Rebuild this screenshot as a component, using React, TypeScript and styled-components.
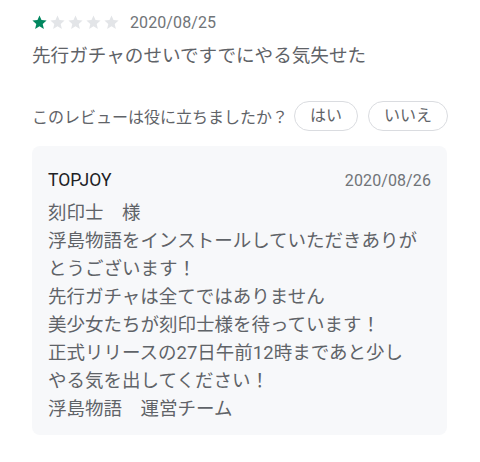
import React from 'react'
import styled, { createGlobalStyle } from 'styled-components'

const GlobalStyle = createGlobalStyle`
  html, body {
    margin: 0;
    padding: 0;
    background: #ffffff;
  }
  body {
    font-family: Roboto, 'Noto Sans CJK JP', sans-serif;
  }
`

const Page = styled.div`
  width: 480px;
  height: 462px;
  box-sizing: border-box;
  padding: 10px 33px 0 32px;
  display: flex;
  flex-direction: column;
`

const MetaRow = styled.div`
  display: flex;
  align-items: center;
  height: 24px;
  gap: 10px;
`

const Stars = styled.div`
  display: flex;
  gap: 1px;
  margin-left: -1px;
`

const DateText = styled.span`
  font-size: 16px;
  color: #707478;
  letter-spacing: 0.1px;
`

const ReviewText = styled.p`
  margin: 8px 0 0;
  font-size: 18.6px;
  line-height: 28px;
  color: #5f6368;
`

const HelpfulRow = styled.div`
  display: flex;
  align-items: center;
  margin-top: 31px;
  white-space: nowrap;
`

const HelpfulLabel = styled.span`
  font-size: 16px;
  color: #5f6368;
  margin-right: 6px;
  flex-shrink: 0;
`

const Chip = styled.button`
  flex-shrink: 0;
  height: 30px;
  padding: 0 15px;
  margin-right: 10px;
  border: 1px solid #dadce0;
  border-radius: 15px;
  background: #ffffff;
  font-family: Roboto, 'Noto Sans CJK JP', sans-serif;
  font-size: 16px;
  color: #5f6368;
  line-height: 28px;
  white-space: nowrap;
`

const ReplyCard = styled.div`
  margin-top: 15px;
  background: #f7f8fa;
  border-radius: 8px;
  padding: 15px 16px 12px 16px;
  height: 289px;
  box-sizing: border-box;
`

const ReplyHeader = styled.div`
  display: flex;
  justify-content: space-between;
  align-items: center;
  height: 38px;
`

const Developer = styled.span`
  font-size: 17.5px;
  color: #202124;
`

const ReplyBody = styled.p`
  margin: 0;
  font-size: 18.5px;
  line-height: 28px;
  color: #5f6368;
  white-space: pre-line;
`

const Star = ({ filled }: { filled: boolean }) => (
  <svg width="17" height="17" viewBox="0 0 24 24">
    <path
      d="M12 17.27L18.18 21l-1.64-7.03L22 9.24l-7.19-.61L12 2 9.19 8.63 2 9.24l5.46 4.73L5.82 21z"
      fill={filled ? '#01875f' : '#e3e5e8'}
    />
  </svg>
)

const reply = `刻印士　様
浮島物語をインストールしていただきありが
とうございます！
先行ガチャは全てではありません
美少女たちが刻印士様を待っています！
正式リリースの27日午前12時まであと少し
やる気を出してください！
浮島物語　運営チーム`

export default function App() {
  return (
    <>
      <GlobalStyle />
      <Page>
        <MetaRow>
          <Stars>
            {[1, 2, 3, 4, 5].map((n) => (
              <Star key={n} filled={n === 1} />
            ))}
          </Stars>
          <DateText>2020/08/25</DateText>
        </MetaRow>
        <ReviewText>先行ガチャのせいですでにやる気失せた</ReviewText>
        <HelpfulRow>
          <HelpfulLabel>このレビューは役に立ちましたか？</HelpfulLabel>
          <Chip>はい</Chip>
          <Chip>いいえ</Chip>
        </HelpfulRow>
        <ReplyCard>
          <ReplyHeader>
            <Developer>TOPJOY</Developer>
            <DateText>2020/08/26</DateText>
          </ReplyHeader>
          <ReplyBody>{reply}</ReplyBody>
        </ReplyCard>
      </Page>
    </>
  )
}
